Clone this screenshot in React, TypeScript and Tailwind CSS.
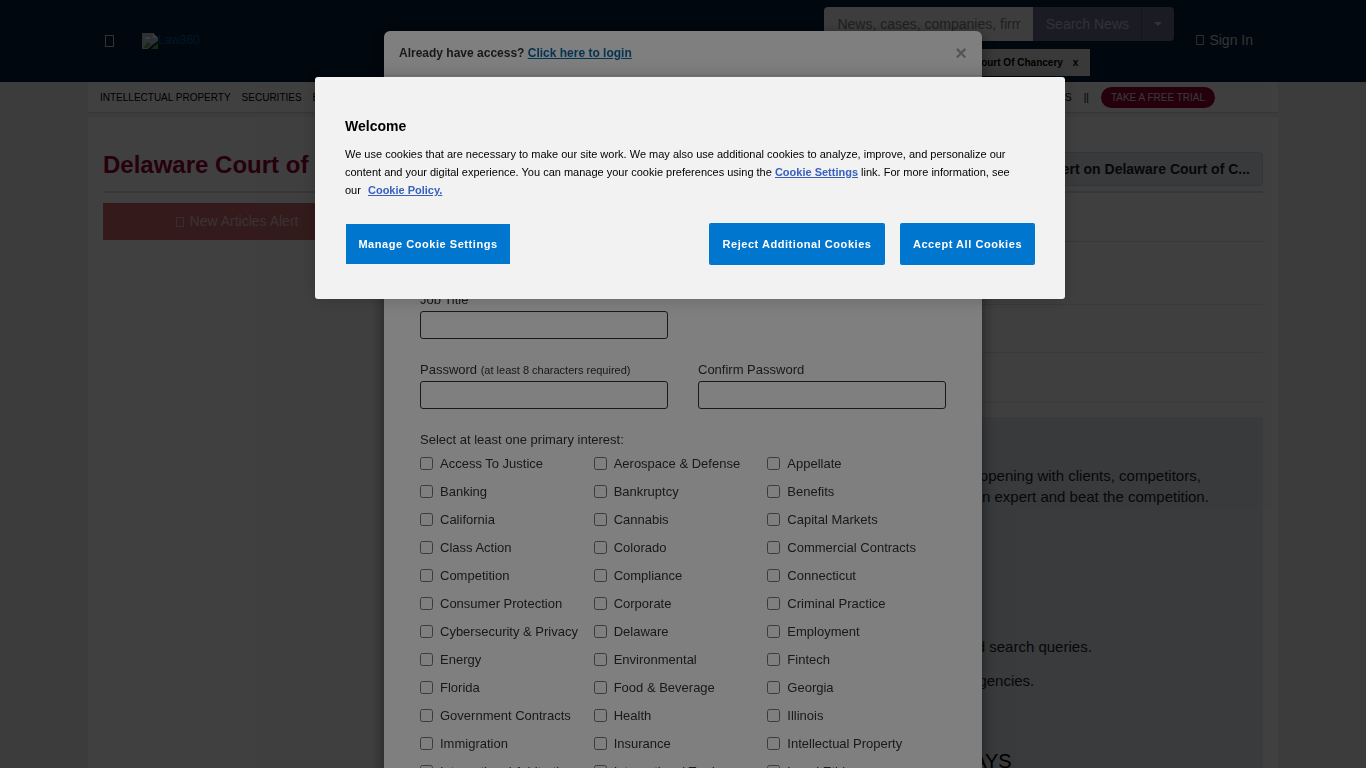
import { useState } from "react";

const interests = [
  "Access To Justice", "Aerospace & Defense", "Appellate",
  "Banking", "Bankruptcy", "Benefits",
  "California", "Cannabis", "Capital Markets",
  "Class Action", "Colorado", "Commercial Contracts",
  "Competition", "Compliance", "Connecticut",
  "Consumer Protection", "Corporate", "Criminal Practice",
  "Cybersecurity & Privacy", "Delaware", "Employment",
  "Energy", "Environmental", "Fintech",
  "Florida", "Food & Beverage", "Georgia",
  "Government Contracts", "Health", "Illinois",
  "Immigration", "Insurance", "Intellectual Property",
  "International Arbitration", "International Trade", "Legal Ethics",
];

function GlyphBox({ className }: { className: string }) {
  return (
    <svg className={className} viewBox="0 0 9 12" fill="none" stroke="currentColor" aria-hidden="true">
      <rect x="0.5" y="0.5" width="8" height="11" />
    </svg>
  );
}

function BrokenImage() {
  return (
    <svg className="h-4 w-4" viewBox="0 0 16 16" aria-hidden="true">
      <path d="M0 0h11l5 5v3L9 13l-3 3H0z" fill="#c4c8cc" />
      <path d="M1 1h9v5h5v1.500L8 12l-3 3H1z" fill="#b3bfd0" />
      <path d="M11 0v5h5z" fill="#f1f1f1" />
      <path d="M3 5.500a2 2 0 0 1 3-1.500 1.800 1.800 0 0 1 2 2H3z" fill="#fff" />
      <path d="M1 15l5-6 3 2.500L5 15z" fill="#5fa53a" />
      <path d="M10 15l6-5v6h-7z" fill="#5fa53a" />
    </svg>
  );
}

function SiteHeader() {
  return (
    <header className="h-[82px] shrink-0 bg-[#001c38] px-[88px]">
      <div className="flex items-start justify-between">
        <div className="flex items-center gap-7 pt-[33px] pl-[17px]">
          <button aria-label="Menu" className="text-[#c8c8c8]">
            <GlyphBox className="h-3 w-[9px]" />
          </button>
          <a href="#home" className="flex text-[12px] leading-[14px] text-[#005b9f]">
            <BrokenImage />
            Law360
          </a>
        </div>
        <div className="flex gap-[22px] pt-[7px] pr-[25px]">
          <div>
            <form className="flex h-[34px] w-[350px] overflow-hidden rounded">
              <input aria-label="Search" placeholder="News, cases, companies, firms" className="w-0 grow bg-[#f4f4f4] pr-3 pl-[13px] text-[14px] placeholder:text-[#808080]" />
              <button type="button" className="w-[108px] bg-[#6a6f8c] text-[14px] text-[#c8c8d0]">Search News</button>
              <button type="button" aria-label="Search options" className="flex w-[33px] items-center justify-center border-l border-[#555a75] bg-[#6a6f8c] text-[#c8c8d0]">
                <svg className="h-1 w-2" viewBox="0 0 8 4" fill="currentColor"><path d="M0 0h8L4 4z" /></svg>
              </button>
            </form>
            <div className="mt-2 flex h-[27px] w-[266px] items-center justify-end gap-[10px] bg-[#e4e4e4] pr-3 text-[10px] font-bold text-black">
              Delaware Court Of Chancery
              <button aria-label="Remove filter">x</button>
            </div>
          </div>
          <a href="#signin" className="mt-[25px] flex h-4 items-center gap-[5px] text-[14px] leading-4 text-[#d0d0d0]">
            <GlyphBox className="h-[10px] w-2" />
            Sign In
          </a>
        </div>
      </div>
    </header>
  );
}

function SectionNav() {
  return (
    <nav className="flex h-[31px] items-center justify-between border-b border-[#d8d8d8] bg-white pr-[63px] pl-3 text-[10px] text-black">
      <div className="flex gap-[11px]">
        <a href="#ip">INTELLECTUAL PROPERTY</a>
        <a href="#securities">SECURITIES</a>
        <a href="#bankruptcy">BANKRUPTCY</a>
        <a href="#competition">COMPETITION</a>
        <a href="#employment">EMPLOYMENT</a>
      </div>
      <div className="flex items-center gap-3">
        <a href="#sections">SEE ALL SECTIONS</a>
        <span>||</span>
        <a href="#trial" className="rounded-full bg-[#970032] px-[10px] py-[3px] text-[#e0e0e0]">TAKE A FREE TRIAL</a>
      </div>
    </nav>
  );
}

function Page() {
  return (
    <div className="flex h-full flex-col bg-[#f0f0f0]">
      <SiteHeader />
      <div className="mx-auto flex w-full max-w-[1190px] grow flex-col">
        <SectionNav />
        <main className="mt-1 grow bg-white px-[15px]">
          <div className="flex h-[76px] items-end justify-between border-b-2 border-[#dedede] pb-[5px]">
            <h1 className="pb-[7px] text-[24px] leading-[28px] font-bold text-[#970032]">Delaware Court of Chancery</h1>
            <a href="#alert" className="rounded-[3px] border border-[#cdd5dc] bg-[#e4ebf2] px-3 py-[6px] text-[14px] leading-5 font-bold text-[#222]">
              Create an alert on Delaware Court of C...
            </a>
          </div>
          <div className="flex gap-[30px]">
            <aside className="w-[268px] pt-[10px]">
              <button className="flex h-[37px] w-full items-center justify-center gap-[6px] bg-[#cf6a6d] text-[14px] text-[#e8c9c9]">
                <GlyphBox className="h-[10px] w-2" />
                New Articles Alert
              </button>
            </aside>
            <div className="grow">
              <div className="h-[49px] border-b border-[#dedede]" />
              <div className="h-[63px] border-b border-[#e4e4e4]" />
              <div className="h-12 border-b border-[#e4e4e4]" />
              <div className="h-[50px] border-b border-[#e8e8e8]" />
              <section className="mt-[14px] h-[400px] border-4 border-[#ececec] bg-[#e4ebf0] px-[10px] pt-11 text-[15px] leading-[21px] text-[#222]">
                <p className="whitespace-nowrap">
                  In the legal profession, information is the key to success. You have to know what's happening with clients, competitors,
                  <br />
                  practice areas, and industries. Law360 provides the intelligence you need to remain an expert and beat the competition.
                </p>
                <ul className="mt-[129px] flex flex-col gap-[13px] pl-[89px]">
                  <li>Access to case data within articles, court documents, dockets and saved search queries.</li>
                  <li>Daily newsletters and custom alerts on courts, companies and federal agencies.</li>
                </ul>
                <h2 className="mt-[58px] text-center text-[20px] leading-6 text-black">TRY LAW360 FREE FOR SEVEN DAYS</h2>
              </section>
            </div>
          </div>
        </main>
      </div>
    </div>
  );
}

function Field({ id, label, note, type = "text" }: { id: string; label: string; note?: string; type?: string }) {
  return (
    <div className="h-[70px]">
      <label htmlFor={id} className="block h-5 leading-[18px]">
        {label} {note && <span className="text-[11px]">{note}</span>}
      </label>
      <input id={id} type={type} className="block h-7 w-full rounded-[3px] border border-[#333] bg-white px-2" />
    </div>
  );
}

function RegistrationModal() {
  return (
    <div className="fixed inset-0 flex items-start justify-center overflow-hidden bg-black/50 pt-[31px]">
      <div role="dialog" aria-label="Registration" className="w-[598px] rounded-md bg-white text-[13px] text-[#333] shadow-[0_5px_15px_rgba(0,0,0,0.5)]">
        <div className="flex h-[45px] items-center justify-between border-b border-[#e5e5e5] px-[15px]">
          <p className="text-[12px] font-bold">
            Already have access? <a href="#login" className="text-[#0a68a6] underline">Click here to login</a>
          </p>
          <button aria-label="Close" className="text-[20px] leading-5 font-bold text-[#aaa]">×</button>
        </div>
        <form className="px-9 pt-[75px]">
          <div className="grid grid-cols-2 gap-x-[30px]">
            <Field id="first" label="First Name" />
            <Field id="last" label="Last Name" />
            <Field id="email" label="Email" />
            <Field id="phone" label="Phone" />
            <Field id="job" label="Job Title" />
            <span />
            <Field id="password" label="Password" note="(at least 8 characters required)" type="password" />
            <Field id="confirm" label="Confirm Password" type="password" />
          </div>
          <p className="leading-[18px]">Select at least one primary interest:</p>
          <div className="mt-[6px] grid grid-cols-3 pr-[5px]">
            {interests.map((name) => (
              <label key={name} className="flex h-7 items-start gap-[7px] leading-[18px] whitespace-nowrap">
                <input type="checkbox" className="mt-[2px] h-[13px] w-[13px] shrink-0" />
                {name}
              </label>
            ))}
          </div>
        </form>
      </div>
    </div>
  );
}

function CookieDialog({ onClose }: { onClose: () => void }) {
  const button = "bg-[#0076ce] font-bold tracking-wider text-white";
  return (
    <div className="fixed inset-0 flex items-start justify-center bg-black/50 pt-[77px] pl-[14px]">
      <div role="dialog" aria-label="Welcome" className="w-[750px] rounded-[3px] bg-[#f2f2f2] px-[30px] pt-10 pb-[34px] text-[11px] text-black shadow-[0_0_18px_rgba(0,0,0,0.2)]">
        <h2 className="text-[14px] leading-[18px] font-bold">Welcome</h2>
        <p className="mt-[10px] pr-2 leading-[18px]">
          We use cookies that are necessary to make our site work. We may also use additional cookies to analyze, improve, and personalize our content and your digital experience. You can manage your cookie preferences using the{" "}
          <a href="#cookies" className="font-bold text-[#3860be] underline">Cookie Settings</a> link. For more information, see
          <br />
          our <a href="#policy" className="ml-1 font-bold text-[#3860be] underline">Cookie Policy.</a>
        </p>
        <div className="mt-6 flex items-center justify-between">
          <button onClick={onClose} className={`${button} ml-px h-10 w-[164px]`}>Manage Cookie Settings</button>
          <div className="flex gap-[15px]">
            <button onClick={onClose} className={`${button} h-[42px] w-[176px] rounded-[2px]`}>Reject Additional Cookies</button>
            <button onClick={onClose} className={`${button} h-[42px] w-[135px] rounded-[2px]`}>Accept All Cookies</button>
          </div>
        </div>
      </div>
    </div>
  );
}

export default function App() {
  const [cookiesOpen, setCookiesOpen] = useState(true);
  return (
    <div className="h-screen overflow-hidden font-['Liberation_Sans',Arial,sans-serif]">
      <Page />
      <RegistrationModal />
      {cookiesOpen && <CookieDialog onClose={() => setCookiesOpen(false)} />}
    </div>
  );
}
